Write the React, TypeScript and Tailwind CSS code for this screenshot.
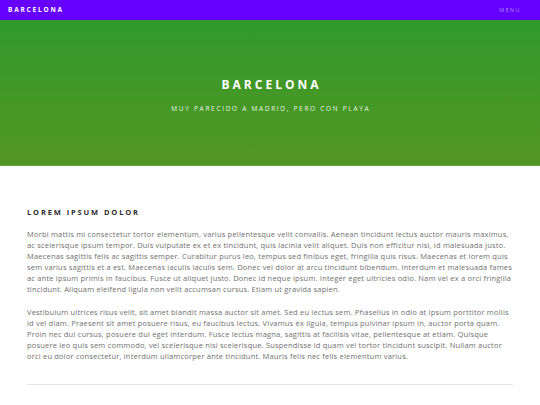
export default function App() {
  return (
    <div className="min-h-[405px] bg-white font-['Open_Sans',sans-serif]">
      <nav className="flex h-5 items-center justify-between bg-[#6600ff] px-2">
        <a className="text-[6.5px] font-bold tracking-[0.28em] text-white">BARCELONA</a>
        <a className="pr-[11px] text-[5.5px] tracking-[0.25em] text-[#a98cf8]">MENU</a>
      </nav>

      <header className="flex h-[146px] flex-col items-center border-b border-[#6aa845] bg-gradient-to-b from-[#2e9a2b] to-[#529622] pt-[59px] text-white">
        <h1 className="pl-[0.25em] text-[12px] font-bold leading-none tracking-[0.25em]">BARCELONA</h1>
        <p className="mt-[15px] pl-[0.26em] text-[6.5px] leading-none tracking-[0.26em] text-[#e6f2e0]">
          MUY PARECIDO A MADRID, PERO CON PLAYA
        </p>
      </header>

      <main className="px-[27px] pt-[43px]">
        <h2 className="text-[7.5px] font-bold leading-none tracking-[0.25em] text-[#2d2d33]">LOREM IPSUM DOLOR</h2>
        <p className="mt-[12px] text-[7.5px] leading-[11px] tracking-[0.026em] text-[#707070]">
          Morbi mattis mi consectetur tortor elementum, varius pellentesque velit convallis. Aenean tincidunt lectus auctor mauris maximus, ac scelerisque ipsum tempor. Duis vulputate ex et ex tincidunt, quis lacinia velit aliquet. Duis non efficitur nisi, id malesuada justo. Maecenas sagittis felis ac sagittis semper. Curabitur purus leo, tempus sed finibus eget, fringilla quis risus. Maecenas et lorem quis sem varius sagittis et a est. Maecenas iaculis iaculis sem. Donec vel dolor at arcu tincidunt bibendum. Interdum et malesuada fames ac ante ipsum primis in faucibus. Fusce ut aliquet justo. Donec id neque ipsum. Integer eget ultricies odio. Nam vel ex a orci fringilla tincidunt. Aliquam eleifend ligula non velit accumsan cursus. Etiam ut gravida sapien.
        </p>
        <p className="mt-[12px] text-[7.5px] leading-[11px] tracking-[0.026em] text-[#707070]">
          Vestibulum ultrices risus velit, sit amet blandit massa auctor sit amet. Sed eu lectus sem. Phasellus in odio at ipsum porttitor mollis id vel diam. Praesent sit amet posuere risus, eu faucibus lectus. Vivamus ex ligula, tempus pulvinar ipsum in, auctor porta quam. Proin nec dui cursus, posuere dui eget interdum. Fusce lectus magna, sagittis at facilisis vitae, pellentesque at etiam. Quisque posuere leo quis sem commodo, vel scelerisque nisi scelerisque. Suspendisse id quam vel tortor tincidunt suscipit. Nullam auctor orci eu dolor consectetur, interdum ullamcorper ante tincidunt. Mauris felis nec felis elementum varius.
        </p>
        <hr className="mt-[22px] border-t border-[#e4e4e4]" />
      </main>
    </div>
  );
}
